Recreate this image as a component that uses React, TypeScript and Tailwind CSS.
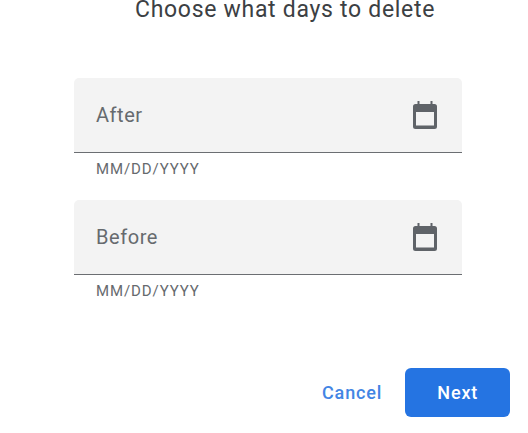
const font = { fontFamily: "Roboto, 'Noto Sans', sans-serif" };

function CalendarIcon() {
  return (
    <svg viewBox="0 0 24 28" className="w-[24px] h-[28px] shrink-0" fill="#5f6368">
      <path
        fillRule="evenodd"
        d="M4.5 0h2v3h11V0h2v3h2A2.5 2.5 0 0 1 24 5.5v20a2.5 2.5 0 0 1-2.5 2.5h-19A2.5 2.5 0 0 1 0 25.5v-20A2.5 2.5 0 0 1 2.5 3h2V0zM3 11v13.5h18V11H3z"
      />
    </svg>
  );
}

function Field({ label }: { label: string }) {
  return (
    <div>
      <div className="h-[75px] bg-[#f3f3f3] rounded-t-[5px] border-b border-[#6b6e72] flex items-center justify-between pl-[22px] pr-[25px]">
        <span className="text-[20px] leading-[24px] text-[#666a6e] tracking-[0.55px]">{label}</span>
        <CalendarIcon />
      </div>
      <div className="pl-[22px] pt-[7px] text-[15px] leading-[18px] text-[#666a6e] tracking-[0.9px]">MM/DD/YYYY</div>
    </div>
  );
}

export default function App() {
  return (
    <div style={font} className="w-[528px] h-[433px] bg-white overflow-hidden flex flex-col">
      <h1 className="h-[20px] pl-[135px] text-[23px] leading-[20px] font-normal text-[#3c4043] tracking-[0.7px] whitespace-nowrap">
        Choose what days to delete
      </h1>
      <div className="ml-[74px] w-[388px] mt-[58px] flex flex-col gap-[21.5px]">
        <Field label="After" />
        <Field label="Before" />
      </div>
      <div className="mt-[68.5px] ml-[322px] flex items-center">
        <button className="text-[18px] font-medium text-[#4285e4] tracking-[0.85px]">Cancel</button>
        <button className="ml-[23px] w-[105px] h-[49px] rounded-[6px] bg-[#2574e2] text-white text-[18px] font-medium tracking-[0.85px]">Next</button>
      </div>
    </div>
  );
}
